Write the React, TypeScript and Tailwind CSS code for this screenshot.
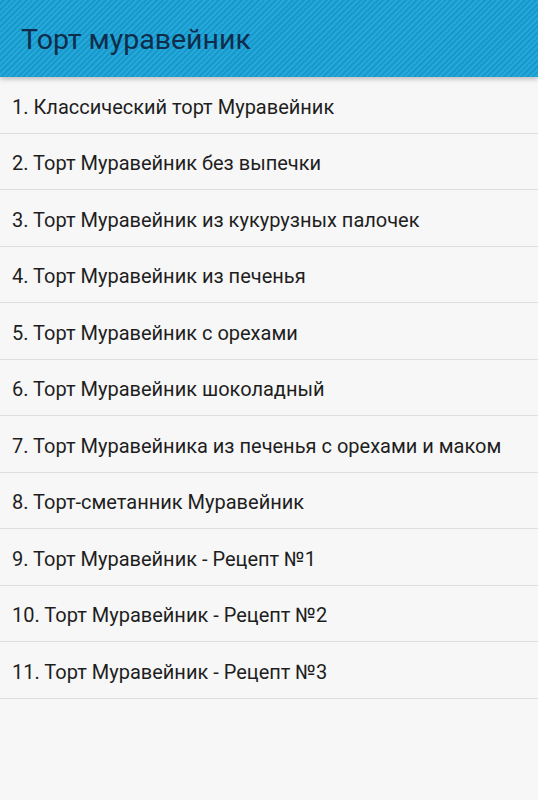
const recipes = [
  "1. Классический торт Муравейник",
  "2. Торт Муравейник без выпечки",
  "3. Торт Муравейник из кукурузных палочек",
  "4. Торт Муравейник из печенья",
  "5. Торт Муравейник с орехами",
  "6. Торт Муравейник шоколадный",
  "7. Торт Муравейника из печенья с орехами и маком",
  "8. Торт-сметанник Муравейник",
  "9. Торт Муравейник - Рецепт №1",
  "10. Торт Муравейник - Рецепт №2",
  "11. Торт Муравейник - Рецепт №3",
]

export default function App() {
  return (
    <div className="w-[538px] h-[800px] bg-[#f7f7f7] overflow-hidden font-['Roboto',sans-serif]">
      <header className="relative z-10 h-[77px] flex items-center px-[21px] pt-[3px] bg-[#1fa3d6] bg-[repeating-linear-gradient(135deg,#22a8da_0px,#22a8da_2px,#1a98c9_2px,#1a98c9_4px)] shadow-[0_2px_5px_rgba(0,0,0,0.25)]">
        <h1 className="text-[28.5px] text-[#0f2c4a] leading-none">Торт муравейник</h1>
      </header>
      <ul>
        {recipes.map((r) => (
          <li
            key={r}
            className="h-[56.5px] flex items-center pl-[12px] pt-[4px] border-b border-[#dedede] text-[20px] text-[#1e1e1e]"
          >
            {r}
          </li>
        ))}
      </ul>
    </div>
  )
}
